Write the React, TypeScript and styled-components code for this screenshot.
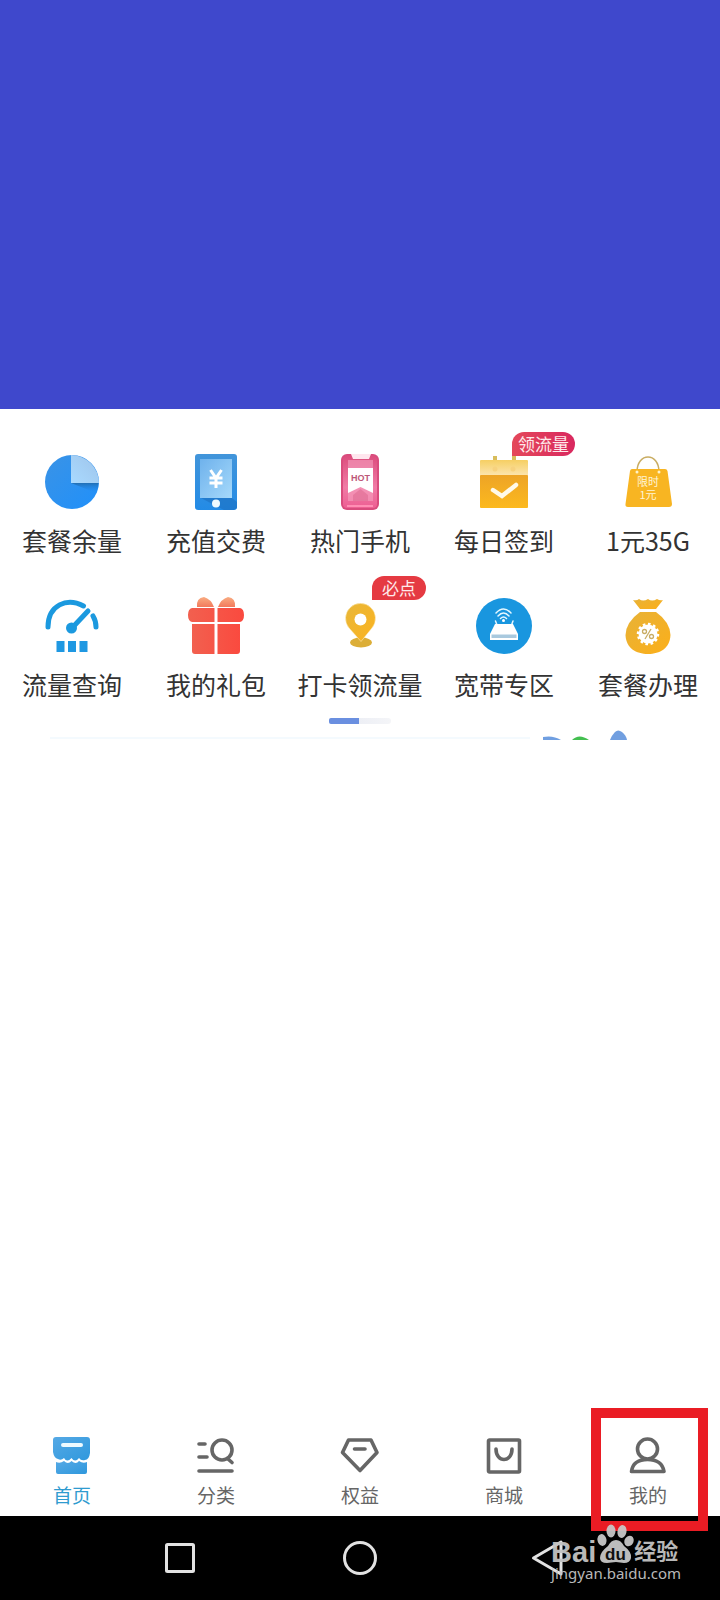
import React from "react";
import styled, { createGlobalStyle } from "styled-components";

const GlobalStyle = createGlobalStyle`
  *, *::before, *::after { box-sizing: border-box; }
  body {
    margin: 0;
    background: #fff;
    font-family: "Noto Sans CJK SC", "Noto Sans", sans-serif;
    color: #333;
  }
  svg { display: block; }
`;

const Page = styled.div`
  min-height: 100vh;
  display: flex;
  flex-direction: column;
`;

const Banner = styled.header`
  height: 409px;
  background: #3f48cc;
`;

const Main = styled.main`
  flex: 1;
`;

const ServiceGrid = styled.nav`
  display: grid;
  grid-template-columns: repeat(5, 1fr);
  row-gap: 39px;
  padding-top: 43px;
`;

const ServiceLink = styled.a`
  position: relative;
  display: flex;
  flex-direction: column;
  align-items: center;
  gap: 11px;
  color: #333;
  text-decoration: none;
`;

const ServiceLabel = styled.span`
  font-size: 25px;
  line-height: 34px;
  font-weight: 400;
  white-space: nowrap;
`;

const Badge = styled.span<{ $wide: boolean }>`
  position: absolute;
  top: -20px;
  left: ${(p) => (p.$wide ? "calc(50% + 8px)" : "calc(50% + 12px)")};
  padding: 0 ${(p) => (p.$wide ? 6 : 10)}px;
  border-radius: 12px 12px 12px 0;
  background: ${(p) => (p.$wide ? "linear-gradient(90deg, #e4485a, #d9285f)" : "#e53a42")};
  color: #ffe9ea;
  font-size: 17px;
  line-height: 24px;
  white-space: nowrap;
`;

const Pager = styled.div`
  width: 62px;
  height: 6px;
  margin: 17px auto 0;
  border-radius: 3px;
  background: linear-gradient(90deg, #e6e9f2, #f4f5f8);
`;

const PagerThumb = styled.div`
  width: 30px;
  height: 6px;
  border-radius: 2px 0 0 2px;
  background: #6a8fe0;
`;

const PromoEdge = styled.div`
  display: flex;
  justify-content: flex-end;
  height: 10px;
  margin-top: 6px;
  padding-right: 12%;
`;

const TabBar = styled.nav`
  display: grid;
  grid-template-columns: repeat(5, 1fr);
`;

const Tab = styled.a<{ $active?: boolean }>`
  position: relative;
  display: flex;
  flex-direction: column;
  align-items: center;
  gap: 8px;
  padding-bottom: 9px;
  color: ${(p) => (p.$active ? "#2f9bcf" : "#666")};
  font-size: 19px;
  line-height: 24px;
  text-decoration: none;
`;

const Highlight = styled.span`
  position: absolute;
  z-index: 1;
  top: -27px;
  right: 12px;
  bottom: -15px;
  left: 15px;
  border: 10px solid #ea1c24;
`;

const SystemBar = styled.footer`
  position: relative;
  display: grid;
  grid-template-columns: repeat(3, 1fr);
  align-items: center;
  justify-items: center;
  height: 84px;
  padding: 0 12.5%;
  background: #000;
`;

const SystemButton = styled.button`
  padding: 0;
  border: 0;
  background: none;
  cursor: pointer;
`;

const Watermark = styled.div`
  position: absolute;
  z-index: 2;
  top: 6px;
  right: 39px;
  color: #c4c4c4;
  opacity: 0.94;
`;

const WatermarkBrand = styled.div`
  display: flex;
  align-items: flex-end;
  height: 41px;
  font: bold 29px/22px "Liberation Sans", sans-serif;
`;

const Paw = styled.svg`
  align-self: flex-start;
`;

const WatermarkCn = styled.span`
  font: bold 22px/28px "Noto Sans CJK SC", sans-serif;
`;

const WatermarkUrl = styled.div`
  font: 15px/20px "Noto Sans", sans-serif;
`;

const ServiceIcon = ({ children }: { children: React.ReactNode }) => (
  <svg width="60" height="60" viewBox="0 0 60 60" aria-hidden="true">{children}</svg>
);

const TabIcon = ({ children }: { children: React.ReactNode }) => (
  <svg width="40" height="40" viewBox="0 0 40 40" fill="none" stroke="#666" strokeWidth="3.6"
    strokeLinecap="round" strokeLinejoin="round" aria-hidden="true">{children}</svg>
);

const PieIcon = () => (
  <ServiceIcon>
    <defs>
      <linearGradient id="pie" x1="0" y1="0" x2="1" y2="1"><stop offset="0" stopColor="#3a93e6" /><stop offset="1" stopColor="#2090fa" /></linearGradient>
      <linearGradient id="pieLight" x1="1" y1="0" x2="0" y2="1"><stop offset="0" stopColor="#9fc4ea" /><stop offset="1" stopColor="#a9daff" /></linearGradient>
      <linearGradient id="pieShade" x1="0" y1="0" x2="0" y2="1"><stop offset="0" stopColor="#226fb4" /><stop offset="1" stopColor="#2090fa" stopOpacity="0" /></linearGradient>
    </defs>
    <circle cx="30" cy="30" r="27" fill="url(#pie)" />
    <path d="M29 31H56.5Q56.500 36 54 41Z" fill="url(#pieShade)" />
    <path d="M29 3A28 28 0 0 1 57 31H29Z" fill="url(#pieLight)" />
  </ServiceIcon>
);

const TopUpIcon = () => (
  <ServiceIcon>
    <defs>
      <linearGradient id="phone" x1="0" y1="0" x2="0" y2="1"><stop offset="0" stopColor="#4295da" /><stop offset="1" stopColor="#238be6" /></linearGradient>
      <linearGradient id="phoneScreen" x1="0" y1="0" x2="1" y2="1"><stop offset="0" stopColor="#6fb2ec" /><stop offset="1" stopColor="#a5d9fb" /></linearGradient>
    </defs>
    <rect x="9" y="2" width="42" height="56" rx="3" fill="url(#phone)" />
    <path d="M15 46H46L51 50V56L48 58H38Z" fill="#1c70bf" opacity=".6" />
    <rect x="14" y="7" width="32" height="39" fill="url(#phoneScreen)" />
    <circle cx="30" cy="51.500" r="4" fill="#eefaff" />
    <path d="M24.500 18L30 26L35.500 18M30 26V36M23.500 26H36.500M23.500 31H36.500" fill="none" stroke="#fff" strokeWidth="3" />
  </ServiceIcon>
);

const HotPhoneIcon = () => (
  <ServiceIcon>
    <defs>
      <linearGradient id="hot" x1="0" y1="0" x2="0" y2="1"><stop offset="0" stopColor="#dc4d7d" /><stop offset=".6" stopColor="#f07ba5" /><stop offset="1" stopColor="#ed5f93" /></linearGradient>
    </defs>
    <rect x="11" y="2" width="38" height="56" rx="6" fill="#d94c7d" />
    <rect x="13" y="4" width="34" height="52" rx="4" fill="url(#hot)" />
    <path d="M18 8H43V49H18Z" fill="#f5a2bf" opacity=".6" />
    <path d="M21 2H41L39 7H23Z" fill="#ffe6ee" />
    <path d="M18 16H43V41L30.500 35L18 41Z" fill="#fff" />
    <text x="30.500" y="29" textAnchor="middle" fontFamily="Liberation Sans, sans-serif" fontWeight="700" fontSize="9" fill="#bd5778">HOT</text>
    <path d="M23 43L30.500 37L38 43V49H23Z" fill="#e17097" opacity=".7" />
    <path d="M17 54H43" stroke="#ff8eb4" strokeWidth="2" />
  </ServiceIcon>
);

const CheckInIcon = () => (
  <ServiceIcon>
    <defs>
      <linearGradient id="calTop" x1="0" y1="0" x2="0" y2="1"><stop offset="0" stopColor="#f6cf63" /><stop offset="1" stopColor="#fde8ba" /></linearGradient>
      <linearGradient id="calBody" x1="0" y1="0" x2="0" y2="1"><stop offset="0" stopColor="#eda426" /><stop offset="1" stopColor="#fcb91e" /></linearGradient>
    </defs>
    <path d="M21 4V10M40 4V10" stroke="#d8bd5c" strokeWidth="4" />
    <rect x="6" y="8" width="48" height="18" rx="1" fill="url(#calTop)" />
    <circle cx="21" cy="17" r="2.500" fill="#f7d27e" /><circle cx="39" cy="17" r="2.500" fill="#f7d27e" />
    <rect x="6" y="23" width="48" height="33" rx="1" fill="url(#calBody)" />
    <path d="M19 38L28 44L42 33" fill="none" stroke="#fff9e8" strokeWidth="4.500" strokeLinecap="round" />
  </ServiceIcon>
);

const ShoppingBagIcon = () => (
  <ServiceIcon>
    <path d="M19 20C19 0 41 0 41 20" fill="none" stroke="#c9ad63" strokeWidth="1.500" />
    <path d="M14 17H47Q49 17 49.500 19L54 52Q54 55 51 55H10Q7 55 7.500 52L12 19Q12.500 17 14 17Z" fill="#f8b522" />
    <circle cx="19" cy="20" r="1.500" fill="#fff2c8" /><circle cx="41" cy="20" r="1.500" fill="#fff2c8" />
    <g fill="#fff4d6" fontFamily="Noto Sans CJK SC, sans-serif" fontSize="11" textAnchor="middle">
      <text x="30" y="34">限时</text><text x="30" y="47">1元</text>
    </g>
  </ServiceIcon>
);

const GaugeIcon = () => (
  <ServiceIcon>
    <g fill="none" stroke="#1b99df" strokeWidth="5" strokeLinecap="round">
      <path d="M6 31C6 9 25 1 41.500 10" />
      <path d="M51 20Q54 25 54 31" />
      <path d="M30 32L46 15" />
    </g>
    <circle cx="29.500" cy="32" r="5.500" fill="#1b99df" />
    <path d="M14.500 45h8v11h-8zM26 45h8v11h-8zM37.500 45h8v11h-8z" fill="#1f98e2" />
  </ServiceIcon>
);

const GiftIcon = () => (
  <ServiceIcon>
    <defs>
      <linearGradient id="gift" x1="0" y1="0" x2="1" y2="0"><stop offset="0" stopColor="#f2604f" /><stop offset="1" stopColor="#fa4a3f" /></linearGradient>
      <linearGradient id="bow" x1="0" y1="0" x2="0" y2="1"><stop offset="0" stopColor="#f9ac81" /><stop offset="1" stopColor="#f27a5c" /></linearGradient>
    </defs>
    <path d="M11 11Q10 2 18 1Q25 3 28 11ZM49 11Q50 2 42 1Q35 3 32 11Z" fill="url(#bow)" />
    <path d="M6 12H28.500V26H6Q2 25 2 19Q2 13 6 12ZM31.500 12H54Q58 13 58 19Q58 25 54 26H31.500Z" fill="url(#gift)" />
    <path d="M6 28H28.500V58H9Q6 58 6 55ZM31.500 28H54V55Q54 58 51 58H31.500Z" fill="url(#gift)" />
  </ServiceIcon>
);

const PinIcon = () => (
  <ServiceIcon>
    <defs><linearGradient id="pin" x1="0" y1="0" x2="1" y2="1"><stop offset="0" stopColor="#e8b739" /><stop offset="1" stopColor="#fcb31f" /></linearGradient></defs>
    <ellipse cx="31" cy="46.500" rx="11" ry="5" fill="#dcae37" />
    <path d="M31 45.500L19 32A15 15 0 1 1 42 32Z" fill="url(#pin)" stroke="#fff5d5" strokeWidth=".5" />
    <circle cx="30.500" cy="23.500" r="6" fill="#fff" />
  </ServiceIcon>
);

const RouterIcon = () => (
  <ServiceIcon>
    <circle cx="30" cy="30" r="28" fill="#1996df" />
    <g fill="none" stroke="#e5f7ff" strokeWidth="1.500" strokeLinecap="round">
      <path d="M22 17Q29.500 9 37 17M24 20Q29.500 14 35 20M26.500 22.500Q29.500 19.500 32.500 22.500" />
      <path d="M21.500 25L23 29M39 25L37.500 29" />
    </g>
    <circle cx="29.500" cy="24.500" r="1.500" fill="#fff" />
    <path d="M21 28H39L44 38V44H16V38Z" fill="#fff" />
    <path d="M17.500 38.500H42.500V42H17.500Z" fill="#a9c9de" />
  </ServiceIcon>
);

const MoneyBagIcon = () => (
  <ServiceIcon>
    <defs><linearGradient id="money" x1="0" y1="0" x2="1" y2="1"><stop offset="0" stopColor="#e7b238" /><stop offset="1" stopColor="#fcaf19" /></linearGradient></defs>
    <path d="M15 4Q19 5 21 3Q25 6 30 3Q34 6 39 3Q42 5 45 4L38 13H22Z" fill="url(#money)" />
    <path d="M22 16H38Q52 26 52.500 39C52 52 42 58 30 58S8 52 7.500 39Q8 26 22 16Z" fill="url(#money)" />
    <circle cx="30" cy="38" r="9.500" fill="#fff" />
    <circle cx="30" cy="38" r="10" fill="none" stroke="#fff" strokeWidth="2.500" strokeDasharray="2.600 2.600" />
    <g fill="none" stroke="#c9ad65" strokeWidth="1.300"><circle cx="26.500" cy="35.500" r="2" /><circle cx="33.500" cy="40.500" r="2" /><path d="M33 33L27 43" /></g>
  </ServiceIcon>
);

const HomeIcon = () => (
  <TabIcon>
    <defs><linearGradient id="home" x1="0" y1="0" x2="1" y2="1"><stop offset="0" stopColor="#55a9e5" /><stop offset="1" stopColor="#2f98dd" /></linearGradient></defs>
    <g stroke="none">
      <path d="M4 2H35Q38 2 38 5V18Q37 25 33 25Q29 26 27 23Q23 28 19.500 23Q15 28 12 23Q9 26 6 24Q2 23 1 17V5Q1 2 4 2Z" fill="url(#home)" />
      <path d="M4 27Q8 29 12 26Q16 30 19.500 26Q24 30 27 26Q31 29 35 27V37Q35 39 33 39H6Q4 39 4 37Z" fill="url(#home)" />
      <rect x="9" y="8" width="22" height="4" rx="2" fill="#edfaff" />
    </g>
  </TabIcon>
);

const CategoryIcon = () => (
  <TabIcon><path d="M3 9H9M3 22H11M3 36H36M32 24L36 27.500" /><circle cx="26" cy="15" r="10" /></TabIcon>
);

const DiamondIcon = () => (
  <TabIcon><path d="M8.500 5H31L37 17.500L20 35.500L2.500 17.500ZM14.500 14H25" /></TabIcon>
);

const MallIcon = () => (
  <TabIcon><rect x="4.500" y="5" width="31" height="32" rx="1" /><path d="M12 14C12 28 28 28 28 14" /></TabIcon>
);

const PersonIcon = () => (
  <TabIcon><circle cx="19.500" cy="14" r="10" /><path d="M3.500 36.500H36Q34 24.500 19.500 24.500T3.500 36.500Z" /></TabIcon>
);

const services: { label: string; Icon: React.FC; badge?: string }[] = [
  { label: "套餐余量", Icon: PieIcon },
  { label: "充值交费", Icon: TopUpIcon },
  { label: "热门手机", Icon: HotPhoneIcon },
  { label: "每日签到", Icon: CheckInIcon, badge: "领流量" },
  { label: "1元35G", Icon: ShoppingBagIcon },
  { label: "流量查询", Icon: GaugeIcon },
  { label: "我的礼包", Icon: GiftIcon },
  { label: "打卡领流量", Icon: PinIcon, badge: "必点" },
  { label: "宽带专区", Icon: RouterIcon },
  { label: "套餐办理", Icon: MoneyBagIcon },
];

const tabs: { label: string; Icon: React.FC; active?: boolean; highlighted?: boolean }[] = [
  { label: "首页", Icon: HomeIcon, active: true },
  { label: "分类", Icon: CategoryIcon },
  { label: "权益", Icon: DiamondIcon },
  { label: "商城", Icon: MallIcon },
  { label: "我的", Icon: PersonIcon, highlighted: true },
];

export default function App() {
  return (
    <Page>
      <GlobalStyle />
      <Banner />
      <Main>
        <ServiceGrid>
          {services.map(({ label, Icon, badge }) => (
            <ServiceLink href="#" key={label}>
              <Icon />
              <ServiceLabel>{label}</ServiceLabel>
              {badge && <Badge $wide={badge.length > 2}>{badge}</Badge>}
            </ServiceLink>
          ))}
        </ServiceGrid>
        <Pager><PagerThumb /></Pager>
        <PromoEdge>
          <svg width="584" height="10" viewBox="0 0 584 10" aria-hidden="true">
            <path d="M0 8H480" stroke="#f4fafe" strokeWidth="2" />
            <path d="M493 10V7Q503 5 511 10Z" fill="#709fe1" />
            <path d="M522 10Q529 3 539 10Z" fill="#43bf50" />
            <path d="M560 10Q562 5 565 2Q568 -1 572 2Q576 5 577 10Z" fill="#719fe0" />
          </svg>
        </PromoEdge>
      </Main>
      <TabBar>
        {tabs.map(({ label, Icon, active, highlighted }) => (
          <Tab href="#" key={label} $active={active} aria-current={active ? "page" : undefined}>
            <Icon />
            <span>{label}</span>
            {highlighted && <Highlight />}
          </Tab>
        ))}
      </TabBar>
      <SystemBar>
        <SystemButton aria-label="最近任务">
          <svg width="34" height="34" viewBox="0 0 34 34"><rect x="3.500" y="3.500" width="27" height="27" rx="1" fill="none" stroke="#e2e2e2" strokeWidth="3" /></svg>
        </SystemButton>
        <SystemButton aria-label="主屏幕">
          <svg width="34" height="34" viewBox="0 0 34 34"><circle cx="17" cy="17" r="15.500" fill="none" stroke="#e2e2e2" strokeWidth="3" /></svg>
        </SystemButton>
        <SystemButton aria-label="返回">
          <svg width="48" height="38" viewBox="0 0 48 38"><path d="M17.500 19L45 3V35Z" fill="none" stroke="#e2e2e2" strokeWidth="3" strokeLinejoin="round" /></svg>
        </SystemButton>
        <Watermark>
          <WatermarkBrand>
            <span>Bai</span>
            <Paw width="38" height="44" viewBox="0 0 38 44" aria-hidden="true">
              <g fill="#c8c8c8">
                <ellipse cx="6" cy="18" rx="4.500" ry="6" transform="rotate(-12 6 18)" />
                <ellipse cx="15" cy="9" rx="4.500" ry="6.500" />
                <ellipse cx="26" cy="9.500" rx="4.500" ry="6.500" transform="rotate(12 26 9.500)" />
                <ellipse cx="33" cy="19" rx="4.500" ry="5.500" transform="rotate(25 33 19)" />
                <path d="M20 18Q25 18 28 24Q36 30 35 36Q34 41 28 41L20 40L11 41Q4 41 4 36Q4 30 12 24Q15 18 20 18Z" />
              </g>
              <text x="19.500" y="38" textAnchor="middle" fontFamily="Liberation Sans, sans-serif" fontWeight="700" fontSize="17" fill="#111">du</text>
            </Paw>
            <WatermarkCn>经验</WatermarkCn>
          </WatermarkBrand>
          <WatermarkUrl>jingyan.baidu.com</WatermarkUrl>
        </Watermark>
      </SystemBar>
    </Page>
  );
}
